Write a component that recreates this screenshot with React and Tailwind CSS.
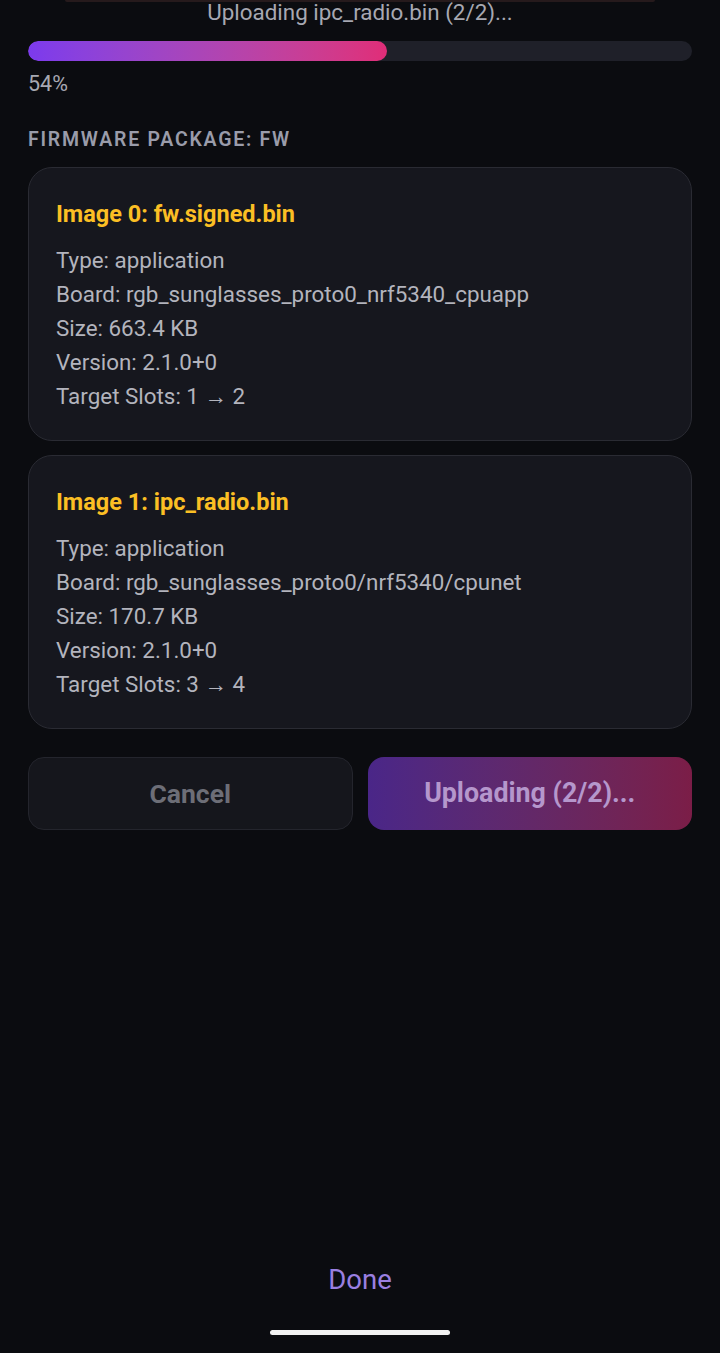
import React from "react";

const images = [
    {
        title: "Image 0: fw.signed.bin",
        lines: [
            "Type: application",
            "Board: rgb_sunglasses_proto0_nrf5340_cpuapp",
            "Size: 663.4 KB",
            "Version: 2.1.0+0",
            "Target Slots: 1 → 2",
        ],
    },
    {
        title: "Image 1: ipc_radio.bin",
        lines: [
            "Type: application",
            "Board: rgb_sunglasses_proto0/nrf5340/cpunet",
            "Size: 170.7 KB",
            "Version: 2.1.0+0",
            "Target Slots: 3 → 4",
        ],
    },
];

const ImageCard = ({ image }) => (
    <div className="rounded-[24px] border border-[#2a2b33] bg-[#16171e] pl-[27px] pr-6 pt-[32px] pb-[27px]">
        <div className="text-[23.5px] leading-[28px] font-bold text-[#fbbf24]">{image.title}</div>
        <div className="mt-[15px]">
            {image.lines.map((line) => (
                <div key={line} className="text-[22.4px] leading-[34px] text-[#b3b4bd]">
                    {line}
                </div>
            ))}
        </div>
    </div>
);

export default function App() {
    const progress = 54;
    return (
        <div
            className="h-[1353px] bg-[#0b0c10] flex flex-col overflow-hidden"
            style={{ fontFamily: "Roboto, 'Noto Sans', sans-serif" }}
        >
            <div className="h-[2px] mx-[65px] bg-[#261a1c] rounded-b" />
            <div className="text-center text-[22.4px] leading-[20px] text-[#a7a8b2]">
                Uploading ipc_radio.bin (2/2)...
            </div>

            <div className="px-[28px]">
                <div className="mt-[19px] h-[20px] rounded-full bg-[#1f2029] overflow-hidden">
                    <div
                        className="h-full rounded-full bg-gradient-to-r from-[#7c3aed] to-[#e02d78]"
                        style={{ width: `${progress}%` }}
                    />
                </div>
                <div className="mt-[11px] text-[21.5px] leading-[24px] text-[#a7a8b2]">{progress}%</div>

                <div className="mt-[32px] text-[19.5px] leading-[24px] font-semibold tracking-[0.09em] text-[#9a9caa]">
                    FIRMWARE PACKAGE: FW
                </div>

                <div className="mt-[15px] flex flex-col gap-[14px]">
                    {images.map((image) => (
                        <ImageCard key={image.title} image={image} />
                    ))}
                </div>

                <div className="mt-[28px] grid grid-cols-2 gap-[15px]">
                    <button className="h-[73px] rounded-[16px] border border-[#24252d] bg-[#15161c] text-[26.5px] font-bold text-[#6d6e77]">
                        Cancel
                    </button>
                    <button className="h-[73px] rounded-[16px] bg-gradient-to-r from-[#4a2688] to-[#7b1d47] text-[26.8px] font-bold text-[#b597cc]">
                        Uploading (2/2)...
                    </button>
                </div>
            </div>

            <div className="flex-1" />

            <div className="text-center text-[27.5px] leading-[32px] text-[#9a7fe0]">Done</div>
            <div className="mt-[34px] mb-[18px] mx-auto h-[5px] w-[180px] rounded-full bg-[#f2f2f2]" />
        </div>
    );
}
